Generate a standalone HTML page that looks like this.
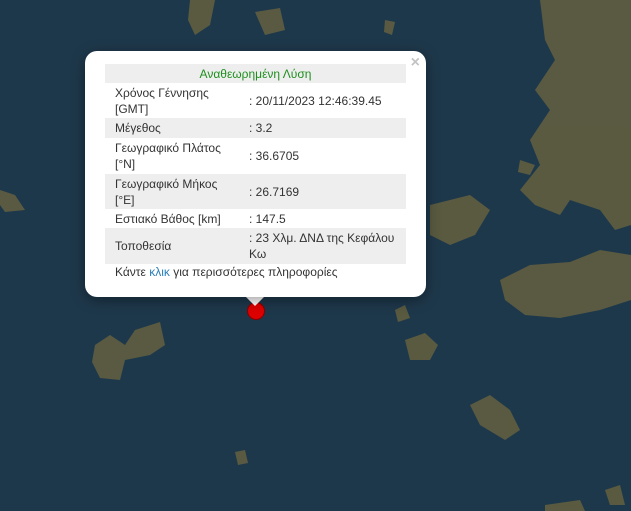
<!DOCTYPE html>
<html><head><meta charset="utf-8"><style>
body{margin:0;width:631px;height:511px;overflow:hidden;background:#1e384b;font-family:"Liberation Sans",Arial,sans-serif;position:relative}
svg{position:absolute;left:0;top:0}
.pop{position:absolute;left:85px;top:51px;width:341px;height:246px;background:#fff;border-radius:12px;box-shadow:0 3px 14px rgba(0,0,0,.4)}
.tip{position:absolute;left:245px;top:296px;width:0;height:0;border-left:10px solid transparent;border-right:10px solid transparent;border-top:10px solid #fff}
.x{position:absolute;right:6px;top:3px;color:#c3c3c3;font-size:16px;font-weight:bold}
table{position:absolute;left:20px;top:13px;width:301px;border-collapse:collapse;font-size:12px;color:#333}
td{padding:0 0 0 10px;line-height:16px;vertical-align:middle}
tr.g{background:#eee}
.h td{text-align:center;color:#1e8f1e;height:19px;padding:0}
.f{position:absolute;left:30px;top:214px;font-size:12px;color:#333}
.f span{color:#2a7fb8}
.dot{position:absolute;left:247px;top:302px;width:16px;height:16px;border-radius:50%;background:#d00;border:1px solid #800}
</style></head><body>
<svg width="631" height="511">
<g fill="#64603f" opacity=".85">
<path d="M540 0H631V225L615 230 600 210 570 200 560 215 535 205 520 190 540 165 530 140 550 110 535 90 555 60 545 40Z"/>
<path d="M430 205 470 195 490 210 475 235 450 245 430 235Z"/>
<path d="M500 280 530 265 570 262 600 250 631 255V300L600 310 560 318 525 315 505 300Z"/>
<path d="M95 345 110 335 125 345 135 330 160 322 165 345 150 355 125 360 120 380 100 378 92 362Z"/>
<path d="M405 340 425 333 438 345 430 360 410 360Z"/>
<path d="M470 405 490 395 510 410 520 430 505 440 480 425Z"/>
<path d="M190 0 215 0 210 25 195 35 188 20Z"/>
<path d="M255 12 280 8 285 30 265 35Z"/>
<path d="M0 190 15 195 25 210 5 212 0 205Z"/>
<path d="M235 452 245 450 248 463 238 465Z"/>
<path d="M545 505 580 500 585 511H545Z"/>
<path d="M605 490 620 485 625 505 610 505Z"/>
<path d="M520 160 535 165 530 175 518 172Z"/>
<path d="M385 20 395 22 392 35 384 32Z"/>
<path d="M395 310 405 305 410 318 398 322Z"/>
</g>
</svg>
<div class="dot"></div>
<div class="tip"></div>
<div class="pop"><div class="x">×</div>
<table>
<tr class="g h"><td colspan="2">Αναθεωρημένη Λύση</td></tr>
<tr style="height:35px"><td style="width:134px">Χρόνος Γέννησης<br>[GMT]</td><td style="padding-left:0">: 20/11/2023 12:46:39.45</td></tr>
<tr class="g" style="height:20px"><td>Μέγεθος</td><td style="padding-left:0">: 3.2</td></tr>
<tr style="height:36px"><td>Γεωγραφικό Πλάτος<br>[°N]</td><td style="padding-left:0">: 36.6705</td></tr>
<tr class="g" style="height:35px"><td>Γεωγραφικό Μήκος<br>[°E]</td><td style="padding-left:0">: 26.7169</td></tr>
<tr style="height:19px"><td>Εστιακό Βάθος [km]</td><td style="padding-left:0">: 147.5</td></tr>
<tr class="g" style="height:36px"><td>Τοποθεσία</td><td style="padding-left:0">: 23 Χλμ. ΔΝΔ της Κεφάλου<br>Κω</td></tr>
</table>
<div class="f">Κάντε <span>κλικ</span> για περισσότερες πληροφορίες</div>
</div>
</body></html>
